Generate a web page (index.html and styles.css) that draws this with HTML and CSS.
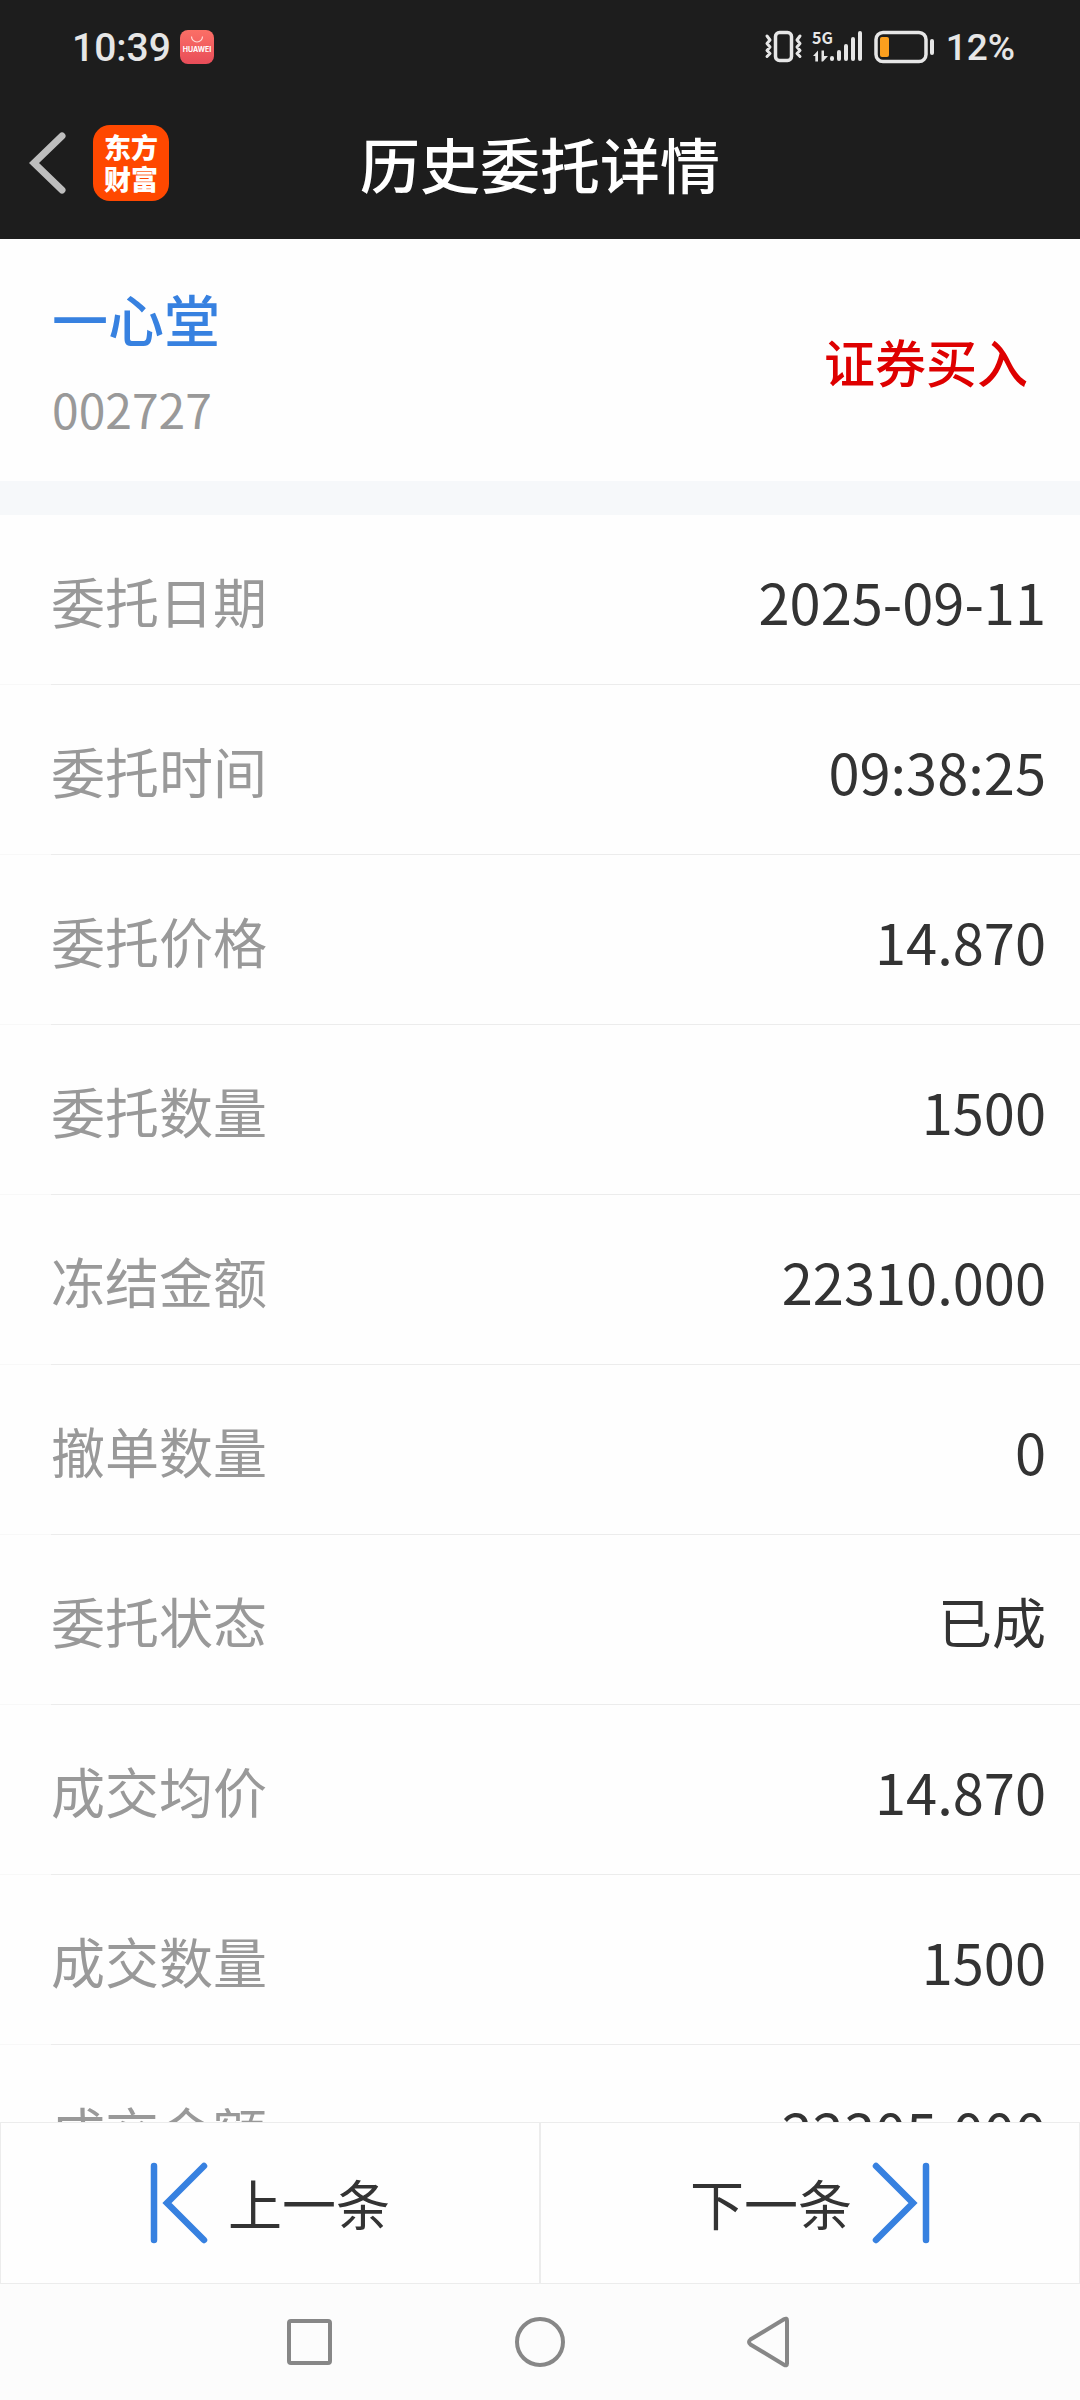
FILE: index.html
```html
<!DOCTYPE html>
<html lang="zh-CN">
<head>
<meta charset="utf-8">
<meta name="viewport" content="width=device-width, initial-scale=1">
<title>历史委托详情</title>
<link rel="stylesheet" href="styles.css">
</head>
<body>
<header class="top">
  <div class="status">
    <div class="status-side">
      <span>10:39</span>
      <svg class="badge" viewBox="0 0 34 34" width="34" height="34" role="img" aria-label="华为应用市场">
        <defs><linearGradient id="badge-fill" x1="0" y1="0" x2="0" y2="1"><stop offset="0" stop-color="#fb6f66"/><stop offset="1" stop-color="#e84d59"/></linearGradient></defs>
        <rect width="34" height="34" rx="8" fill="url(#badge-fill)"/>
        <path d="M11.500 6.500a5.500 5.500 0 0 0 11 0" fill="none" stroke="#ffd9d6" stroke-width="1.200"/>
        <text class="badge-text" x="17" y="22" text-anchor="middle">HUAWEI</text>
      </svg>
    </div>
    <div class="status-side">
      <svg viewBox="0 0 110 34" width="110" height="34" aria-hidden="true">
        <g fill="none" stroke="#e6e6e6" stroke-width="3.500" stroke-linejoin="round" stroke-linecap="round">
          <rect x="11.500" y="2.500" width="16" height="28" rx="4"/>
          <path d="M3 6l3 4-3 3.500 3 3.500-3 3.500 3 3-3 3M36 6l-3 4 3 3.500-3 3.500 3 3.500-3 3 3 3" stroke-width="3"/>
        </g>
        <text class="net" x="48" y="14">5G</text>
        <g fill="#e6e6e6">
          <path d="M49 26l5-5.500V31.500h-2.700V26zM57.500 20.500h2.500v5.500h4l-5 5.500h-1.500z"/>
          <rect x="66" y="26" width="4" height="5" rx="2"/>
          <rect x="73" y="20" width="4" height="11" rx="2"/>
          <rect x="80" y="14" width="4" height="17" rx="2"/>
          <rect x="87" y="7" width="4" height="24" rx="2"/>
          <rect x="94" y="1" width="4" height="30" rx="2"/>
        </g>
      </svg>
      <svg viewBox="0 0 62 34" width="62" height="34" aria-hidden="true">
        <rect x="2" y="2.500" width="50" height="29" rx="7" fill="none" stroke="#e6e6e6" stroke-width="3.500"/>
        <rect x="6" y="7" width="9" height="20" rx="2" fill="#fb9f1e"/>
        <rect x="56" y="9" width="4" height="16" rx="2" fill="#e6e6e6"/>
      </svg>
      <span class="percent">12%</span>
    </div>
  </div>
  <div class="titlebar">
    <div class="title-left">
      <button class="plain" type="button" aria-label="返回">
        <svg viewBox="0 0 38 62" width="38" height="62"><path d="M33 4L5 31l28 27" fill="none" stroke="#bebebe" stroke-width="7" stroke-linecap="round" stroke-linejoin="miter"/></svg>
      </button>
      <a class="logo" href="#"><span>东方</span><span>财富</span></a>
    </div>
    <h1 class="title">历史委托详情</h1>
  </div>
</header>
<main class="content">
  <section class="stock">
    <div>
      <h2 class="stock-name">一心堂</h2>
      <p class="stock-code">002727</p>
    </div>
    <p class="side">证券买入</p>
  </section>
  <dl class="details">
    <div class="row"><dt>委托日期</dt><dd>2025-09-11</dd></div>
    <div class="row"><dt>委托时间</dt><dd>09:38:25</dd></div>
    <div class="row"><dt>委托价格</dt><dd>14.870</dd></div>
    <div class="row"><dt>委托数量</dt><dd>1500</dd></div>
    <div class="row"><dt>冻结金额</dt><dd>22310.000</dd></div>
    <div class="row"><dt>撤单数量</dt><dd>0</dd></div>
    <div class="row"><dt>委托状态</dt><dd class="word">已成</dd></div>
    <div class="row"><dt>成交均价</dt><dd>14.870</dd></div>
    <div class="row"><dt>成交数量</dt><dd>1500</dd></div>
    <div class="row"><dt>成交金额</dt><dd>22305.000</dd></div>
  </dl>
</main>
<footer>
  <div class="pager">
    <button class="page" type="button">
      <svg viewBox="0 0 58 82" width="58" height="82" aria-hidden="true"><path d="M4 4v74M54 4L17 41l37 37" fill="none" stroke="#3781e0" stroke-width="6.500" stroke-linecap="round"/></svg>
      <span>上一条</span>
    </button>
    <button class="page" type="button">
      <span>下一条</span>
      <svg viewBox="0 0 58 82" width="58" height="82" aria-hidden="true"><path d="M54 4v74M4 4l37 37L4 78" fill="none" stroke="#3781e0" stroke-width="6.500" stroke-linecap="round"/></svg>
    </button>
  </div>
  <nav class="system">
    <button class="plain" type="button" aria-label="最近任务"><svg viewBox="0 0 52 52" width="52" height="52"><rect x="5" y="5" width="41" height="42" rx="2"/></svg></button>
    <button class="plain" type="button" aria-label="主屏幕"><svg viewBox="0 0 52 52" width="52" height="52"><circle cx="26" cy="26" r="23"/></svg></button>
    <button class="plain" type="button" aria-label="后退"><svg viewBox="0 0 52 52" width="52" height="52"><path d="M43 4.500v43q0 3-3 1.200L6.500 28.500q-3-2.500 0-5L40 3.300q3-1.800 3 1.200z"/></svg></button>
  </nav>
</footer>
</body>
</html>
```
FILE: styles.css
```css
* { box-sizing: border-box; margin: 0; padding: 0; }

body {
  display: flex;
  flex-direction: column;
  height: 100vh;
  background: #fefefe;
  color: #333;
  font: 54px/80px "Noto Sans CJK SC", sans-serif;
}

button { font: inherit; color: inherit; background: none; border: 0; }
svg { display: block; flex: none; }
a { color: inherit; text-decoration: none; }

.plain { display: flex; align-items: center; justify-content: center; }

/* status bar and title */
.top { flex: none; background: #1d1d1d; color: #fff; }

.status {
  display: flex;
  align-items: center;
  justify-content: space-between;
  height: 94px;
  padding: 0 65px 0 72px;
  color: #e6e6e6;
  font: 500 39px/48px "Roboto", sans-serif;
}
.status-side { display: flex; align-items: center; }
.status-side span { padding-top: 2px; }
.badge { margin-left: 9px; }
.badge-text { font: 700 7px "Inter", sans-serif; fill: #fff; }
.net { font: 700 16px "Liberation Sans Narrow", "Noto Sans CJK SC", sans-serif; fill: #e6e6e6; }
.percent { margin-left: 10px; font-size: 37px; }

.titlebar {
  display: grid;
  grid-template-columns: 1fr auto 1fr;
  align-items: center;
  height: 145px;
  padding: 0 29px 8px;
}
.title-left { display: flex; align-items: center; gap: 26px; }
.title { font-size: 60px; font-weight: 500; }
.logo {
  display: flex;
  flex-direction: column;
  align-items: center;
  justify-content: center;
  width: 76px;
  height: 76px;
  border-radius: 17px;
  background: #ff4800;
  font-size: 27px;
  font-weight: 900;
  line-height: 32px;
}

/* order details */
.content { flex: 1; min-height: 0; overflow-y: auto; scrollbar-width: none; }

.stock {
  display: flex;
  align-items: center;
  justify-content: space-between;
  padding: 37px 52px 30px;
}
.stock-name { color: #3781e0; font-size: 56px; font-weight: 500; line-height: 84px; }
.stock-code { margin-top: 5px; color: #999; font-size: 48px; line-height: 86px; }
.side { padding-bottom: 6px; color: #de0000; font-size: 51px; font-weight: 500; }

.details { border-top: 34px solid #f6f8fa; }
.row {
  display: flex;
  align-items: center;
  justify-content: space-between;
  height: 170px;
  padding: 1px 34px 0 51px;
  background: linear-gradient(to right, #f8f8f8 51px, #ececec 51px) bottom / 100% 1px no-repeat;
}
dt { color: #999; }
dd { font-size: 56px; }
.word { font-size: 54px; }

/* previous / next */
.pager { display: grid; grid-template-columns: 1fr 1fr; }
.page {
  display: flex;
  align-items: center;
  justify-content: center;
  gap: 20px;
  height: 162px;
  border: 1px solid #ececec;
  background: #fefefe;
}

/* system navigation */
.system {
  display: grid;
  grid-template-columns: repeat(3, 1fr);
  height: 116px;
  padding: 0 18%;
  background: #fcfcfc;
}
.system svg { fill: none; stroke: #878787; stroke-width: 4; }
```
